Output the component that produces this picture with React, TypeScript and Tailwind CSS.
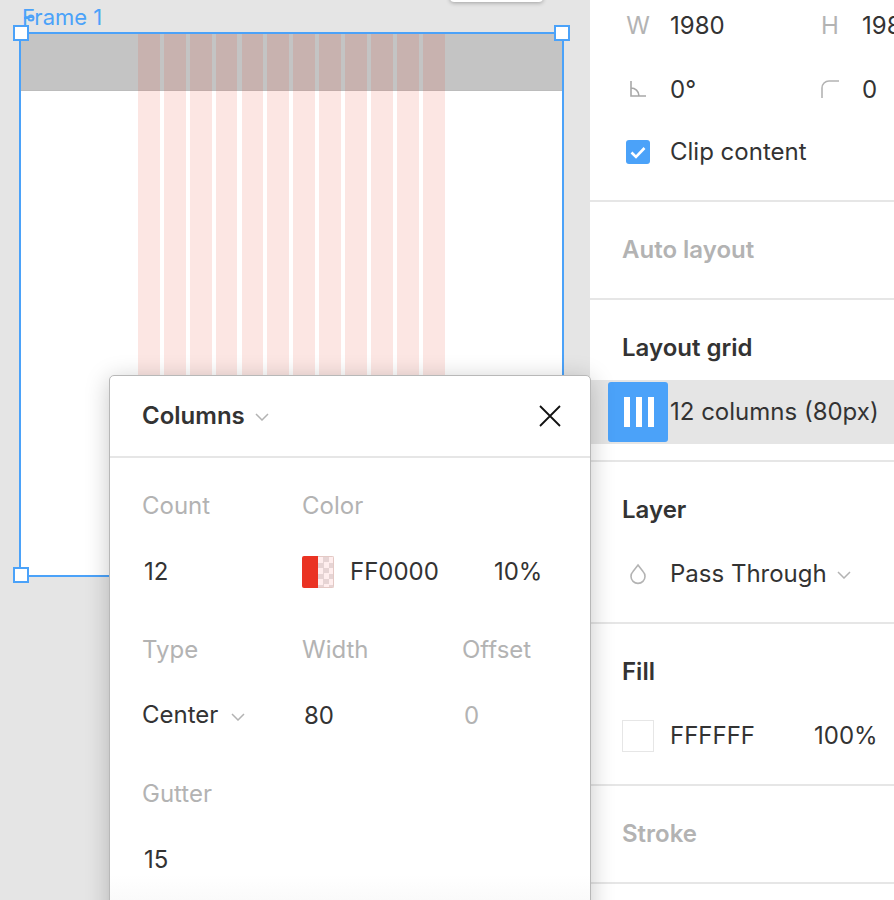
const columns = Array.from({ length: 12 }, (_, i) => i);

function Chevron({ className }: { className?: string }) {
  return (
    <svg className={className} width="14" height="8" viewBox="0 0 14 8" fill="none">
      <path d="M1 1l6 6 6-6" stroke="#b3b3b3" strokeWidth="1.5" />
    </svg>
  );
}

function Handle({ className }: { className: string }) {
  return <div className={`absolute w-4 h-4 bg-white border-2 border-[#4ba2f9] ${className}`} />;
}

function Field({ label, children }: { label: React.ReactNode; children: React.ReactNode }) {
  return (
    <div className="flex items-center h-[50px] w-[192px] shrink-0">
      <div className="w-[48px] flex justify-center items-center text-[#b3b3b3]">{label}</div>
      <div className="ml-2 whitespace-nowrap">{children}</div>
    </div>
  );
}

function Section({ title, muted, children }: { title: string; muted?: boolean; children?: React.ReactNode }) {
  return (
    <div className="border-b-2 border-[#e6e6e6]">
      <div className={`pt-[36px] pl-[32px] h-[60px] leading-[24px] font-semibold ${muted ? 'text-[#b3b3b3]' : 'text-[#333]'}`}>
        {title}
      </div>
      {children ? <div className="mt-[20px] h-[64px] flex items-center relative">{children}</div> : <div className="h-[36px]" />}
      {children ? <div className="h-[16px]" /> : null}
    </div>
  );
}

function PopCell({ label, muted, children }: { label: string; muted?: boolean; children?: React.ReactNode }) {
  return (
    <div>
      <div className="h-[24px] leading-[24px] text-[#b3b3b3]">{label}</div>
      <div className={`mt-[42px] h-[24px] leading-[24px] flex items-center whitespace-nowrap ${muted ? 'text-[#b3b3b3]' : 'text-[#333]'}`}>
        {children}
      </div>
    </div>
  );
}

export default function App() {
  return (
    <div className="w-[894px] h-[900px] overflow-hidden flex bg-white text-[#333] text-[24px] font-['Inter',sans-serif]">
      {/* Canvas */}
      <div className="relative z-10 w-[590px] h-[900px] shrink-0 bg-[#e5e5e5]">
        <div className="absolute left-[22px] top-[4px] text-[22px] leading-[26px] text-[#4ba2f9]">Frame 1</div>
        <svg className="absolute left-[22px] top-[12px]" width="16" height="12" viewBox="0 0 16 12" fill="none">
          <circle cx="9" cy="6" r="2.5" stroke="#4ba2f9" strokeWidth="2" />
          <path d="M2 6h5" stroke="#4ba2f9" strokeWidth="2" />
        </svg>

        <div className="absolute left-[450px] top-[-10px] w-[93px] h-[12px] bg-white rounded-[4px] shadow-[0_1px_4px_rgba(0,0,0,0.3)]" />

        {/* Frame */}
        <div className="absolute left-[19px] top-[32px] w-[545px] h-[545px] border-2 border-[#4ba2f9] bg-white">
          <div className="h-[57px] bg-[#c4c4c4] border-b border-[#bcbcbc]" />
          <div className="absolute left-[117px] top-0 bottom-0 flex gap-[4.1px]">
            {columns.map((c) => (
              <div key={c} className="w-[21.8px] h-full bg-[#e63a2a]/[0.13]" />
            ))}
          </div>
        </div>
        <Handle className="left-[13px] top-[25px]" />
        <Handle className="left-[554px] top-[25px]" />
        <Handle className="left-[13px] top-[567px]" />

        {/* Columns popover */}
        <div className="absolute left-[109px] top-[375px] w-[482px] h-[560px] bg-white border border-[#b8b8b8] rounded-[5px] shadow-[0_4px_24px_rgba(0,0,0,0.22)]">
          <div className="h-[82px] border-b-2 border-[#e6e6e6] pl-[32px] pr-[28px] flex items-center justify-between">
            <div className="flex items-center gap-[10px] font-semibold">
              Columns
              <Chevron className="mt-[2px]" />
            </div>
            <svg width="24" height="24" viewBox="0 0 24 24" fill="none">
              <path d="M2 2l20 20M22 2L2 22" stroke="#111" strokeWidth="1.8" />
            </svg>
          </div>
          <div className="pl-[32px] pt-[36px] grid grid-cols-[160px_160px_160px] gap-y-[54px]">
            <PopCell label="Count">
              <span className="ml-[2px]">12</span>
            </PopCell>
            <div className="col-span-2">
              <PopCell label="Color">
                <div className="w-[32px] h-[32px] -mt-[1px] rounded-[2px] overflow-hidden flex">
                  <div className="w-1/2 bg-[#ea3323]" />
                  <div className="w-1/2 border border-l-0 border-[#e4c9c5] bg-[repeating-conic-gradient(#e6d4d4_0_25%,#ffeeee_0_50%)] bg-[length:11px_11px]" />
                </div>
                <span className="ml-[16px]">FF0000</span>
                <span className="ml-[55px]">10%</span>
              </PopCell>
            </div>
            <PopCell label="Type">
              <span className="-mt-[2px]">Center</span>
              <Chevron className="ml-[13px] mt-[2px]" />
            </PopCell>
            <PopCell label="Width">
              <span className="ml-[2px]">80</span>
            </PopCell>
            <PopCell label="Offset" muted>
              <span className="ml-[2px]">0</span>
            </PopCell>
            <PopCell label="Gutter">
              <span className="ml-[2px]">15</span>
            </PopCell>
          </div>
          <div className="absolute left-0 right-0 top-[499px] h-[26px] bg-gradient-to-b from-white to-[#fafafa]" />
        </div>
      </div>

      {/* Right panel */}
      <div className="w-[304px] shrink-0 bg-white">
        <div className="h-[202px] border-b-2 border-[#e6e6e6] pl-[24px] pt-[1px]">
          <div className="flex">
            <Field label={<span>W</span>}>1980</Field>
            <Field label={<span>H</span>}>1980</Field>
          </div>
          <div className="flex mt-[14px]">
            <Field
              label={
                <svg className="-mt-[3px]" width="16" height="16" viewBox="0 0 16 16" fill="none">
                  <path d="M1 0v15h15M1 7c4 0 8 3 8 8" stroke="#a8a8a8" strokeWidth="1.6" />
                </svg>
              }
            >
              0°
            </Field>
            <Field
              label={
                <svg className="-mt-[2px]" width="18" height="18" viewBox="0 0 18 18" fill="none">
                  <path d="M1 18V8a7 7 0 0 1 7-7h10" stroke="#b3b3b3" strokeWidth="1.6" />
                </svg>
              }
            >
              0
            </Field>
          </div>
          <div className="flex items-center h-[50px] mt-[12px] pl-[12px]">
            <div className="w-[24px] h-[24px] rounded-[3px] bg-[#4ba2f9] flex items-center justify-center">
              <svg width="16" height="13" viewBox="0 0 16 13" fill="none">
                <path d="M1.5 6.5l4.5 4.5 8.5-9" stroke="#fff" strokeWidth="2.6" />
              </svg>
            </div>
            <span className="ml-[20px]">Clip content</span>
          </div>
        </div>

        <Section title="Auto layout" muted />

        <Section title="Layout grid">
          <div className="absolute inset-0 bg-[#e5e5e5]" />
          <div className="relative ml-[18px] w-[60px] h-[60px] rounded-[3px] bg-[#4ba2f9] flex items-center justify-center gap-[6px] pl-[2px]">
            <div className="w-[6px] h-[30px] bg-white" />
            <div className="w-[6px] h-[30px] bg-white" />
            <div className="w-[6px] h-[30px] bg-white" />
          </div>
          <span className="relative ml-[2px] whitespace-nowrap">12 columns (80px)</span>
        </Section>

        <Section title="Layer">
          <svg className="ml-[39px]" width="18" height="22" viewBox="0 0 18 22" fill="none">
            <path d="M9 2l5 6.5a7 7 0 1 1-10 0z" stroke="#b3b3b3" strokeWidth="1.6" />
          </svg>
          <span className="ml-[23px] whitespace-nowrap">Pass Through</span>
          <Chevron className="ml-[10px] mt-[2px]" />
        </Section>

        <Section title="Fill">
          <div className="ml-[32px] w-[32px] h-[32px] bg-white border border-[#e6e6e6]" />
          <span className="ml-[16px]">FFFFFF</span>
          <span className="ml-[59px]">100%</span>
        </Section>

        <Section title="Stroke" muted />
      </div>
    </div>
  );
}
